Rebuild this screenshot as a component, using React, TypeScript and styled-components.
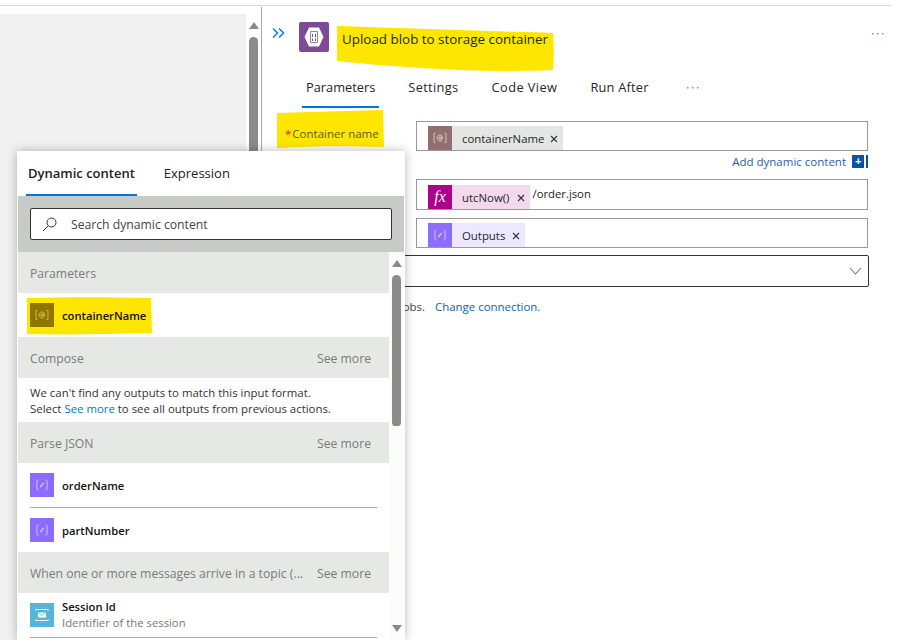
import React from "react";
import styled, { createGlobalStyle } from "styled-components";

const Global = createGlobalStyle`
  html, body { margin: 0; padding: 0; background: #fff; }
  body { font-family: "Open Sans", "Noto Sans", Arial, sans-serif; font-size: 12.5px; color: #222; }
`;

const Page = styled.div`
  position: relative;
  width: 902px;
  height: 640px;
  overflow: hidden;
  background: #fff;
  display: flex;
  flex-direction: column;
`;
const TopRule = styled.div`
  margin-top: 5px;
  width: 891px;
  height: 1px;
  flex: none;
  background: #dcdcdc;
`;
const Body = styled.div`
  flex: 1;
  display: flex;
  min-height: 0;
`;
const LeftPane = styled.div`
  width: 261px;
  flex: none;
  display: flex;
`;
const Canvas = styled.div`
  width: 246px;
  margin-top: 8px;
  background: #f1f1f1;
`;
const Track = styled.div`
  display: flex;
  flex-direction: column;
  align-items: center;
  flex: none;
`;
const LeftTrack = styled(Track)`
  width: 9px;
  margin-left: 3px;
  padding-top: 16px;
`;
const ArrowUp = styled.div`
  width: 0;
  height: 0;
  border-left: 5px solid transparent;
  border-right: 5px solid transparent;
  border-bottom: 7px solid #8a8a8a;
`;
const ArrowDown = styled(ArrowUp)`
  transform: rotate(180deg);
`;
const Thumb = styled.div<{ $h: number; $gap: number }>`
  width: 9px;
  height: ${(p) => p.$h}px;
  margin-top: ${(p) => p.$gap}px;
  border-radius: 5px 5px 4px 4px;
  background: #8b8b8b;
  flex: none;
`;
const RightPane = styled.div`
  flex: 1;
  margin-top: 1px;
  border-left: 1px solid #a9a9a9;
  min-width: 0;
`;
const Header = styled.div`
  display: flex;
  align-items: center;
  height: 30px;
  margin-top: 15px;
  padding: 0 18px 0 10px;
`;
const Chevrons = styled.svg`
  width: 13px;
  height: 12px;
  margin: -8px 14px 0 0;
  flex: none;
`;
const BlobBadge = styled.div`
  width: 30px;
  height: 30px;
  background: #804998;
  border-radius: 2px;
  display: flex;
  align-items: center;
  justify-content: center;
  flex: none;
`;
const Marked = styled.div`
  position: relative;
  isolation: isolate;
`;
const MarkerStroke = styled.svg<{ $l: number; $t: number; $w: number; $h: number }>`
  position: absolute;
  left: ${(p) => p.$l}px;
  top: ${(p) => p.$t}px;
  width: ${(p) => p.$w}px;
  height: ${(p) => p.$h}px;
  z-index: -1;
`;
const Title = styled(Marked)`
  margin-left: 13px;
  padding-top: 4px;
  font-size: 13.4px;
  line-height: 20px;
  color: #1c2a10;
  white-space: nowrap;
`;
const Dots = styled.svg`
  width: 12px;
  height: 3px;
  flex: none;
`;
const HeaderDots = styled(Dots)`
  margin-left: auto;
  margin-top: -7px;
`;
const Tabs = styled.div`
  display: flex;
  align-items: stretch;
  gap: 25px;
  height: 40px;
  margin-top: 16px;
  padding-left: 40px;
`;
const Tab = styled.div<{ $on?: boolean; $ls?: number }>`
  padding: 0 4px;
  display: flex;
  align-items: center;
  font-size: 12.8px;
  letter-spacing: ${(p) => p.$ls ?? 0}px;
  color: #262626;
  white-space: nowrap;
  border-bottom: 2px solid ${(p) => (p.$on ? "#0078d4" : "transparent")};
  box-sizing: border-box;
`;
const TabDots = styled(Dots)`
  align-self: center;
  margin-left: 9px;
  margin-top: -2px;
`;
const Form = styled.div`
  padding-left: 154px;
  padding-top: 13px;
  position: relative;
`;
const FieldLabel = styled(Marked)`
  position: absolute;
  left: 23px;
  top: 18px;
  font-size: 11.5px;
  line-height: 16px;
  color: #5c5a10;
  white-space: nowrap;
`;
const Star = styled.span`
  color: #e81123;
  margin-right: 1px;
`;
const Field = styled.div<{ $h: number; $mb: number }>`
  width: 452px;
  height: ${(p) => p.$h}px;
  margin-bottom: ${(p) => p.$mb}px;
  box-sizing: border-box;
  border: 1px solid #999;
  padding-left: 11px;
  display: flex;
  align-items: flex-end;
`;
const Chip = styled.div<{ $bg: string }>`
  display: flex;
  align-items: center;
  height: 24px;
  background: ${(p) => p.$bg};
  padding-right: 5px;
`;
const ChipText = styled.span<{ $gap?: number }>`
  margin: 0 ${(p) => p.$gap ?? 6}px 0 10px;
  font-size: 11.4px;
  color: #262626;
  white-space: nowrap;
`;
const Close = styled.svg`
  width: 8px;
  height: 8px;
  margin-top: 2px;
`;
const Plain = styled.span`
  align-self: flex-start;
  margin: 4px 0 0 2px;
  font-size: 11.3px;
  line-height: 20px;
  color: #222;
`;
const LinkRow = styled.div`
  width: 452px;
  height: 28px;
  display: flex;
  justify-content: flex-end;
  align-items: flex-start;
  padding-top: 3px;
  box-sizing: border-box;
`;
const AddLink = styled.span`
  font-size: 11.5px;
  line-height: 16px;
  color: #1f5fad;
  margin-right: 6px;
`;
const PlusBox = styled.div`
  width: 16px;
  height: 13px;
  margin-top: 1px;
  background: linear-gradient(90deg, #0a52a5 0 12px, transparent 12px 14px, #0a52a5 14px);
  color: #fff;
  font: bold 11px/13px "Liberation Sans", sans-serif;
  text-indent: 3px;
`;
const Dropdown = styled.div`
  width: 473px;
  height: 32px;
  margin-left: -20px;
  box-sizing: border-box;
  border: 1px solid #333;
  border-radius: 2px;
  display: flex;
  align-items: center;
  justify-content: flex-end;
  padding-right: 6px;
`;
const Chevron = styled.svg`
  width: 13px;
  height: 8px;
`;
const ConnectionLine = styled.div`
  margin-top: 12px;
  margin-left: -154px;
  display: flex;
  font-size: 11.45px;
  line-height: 16px;
  color: #444;
  white-space: nowrap;
`;
const ConnectedText = styled.div`
  width: 163px;
  display: flex;
  justify-content: flex-end;
  overflow: hidden;
`;
const ChangeLink = styled.span`
  margin-left: 10px;
  color: #0f62ae;
`;

/* Dynamic content flyout */
const Flyout = styled.div`
  position: absolute;
  left: 17px;
  top: 151px;
  width: 388px;
  height: 489px;
  box-sizing: border-box;
  padding: 0 1px;
  background: #fff;
  box-shadow: 0 0 10px rgba(0, 0, 0, 0.28);
  display: flex;
  flex-direction: column;
`;
const Caret = styled.div`
  position: absolute;
  right: -6px;
  top: 6px;
  width: 13px;
  height: 13px;
  background: #fff;
  transform: rotate(45deg);
  box-shadow: 2px -2px 4px rgba(0, 0, 0, 0.08);
  z-index: -1;
`;
const FlyTabs = styled.div`
  display: flex;
  height: 45px;
  flex: none;
  padding-left: 8px;
  gap: 25px;
`;
const FlyTab = styled.div<{ $on?: boolean }>`
  padding: 0 2px;
  display: flex;
  align-items: center;
  box-sizing: border-box;
  font-size: 13px;
  font-weight: ${(p) => (p.$on ? 600 : 400)};
  color: #222;
  white-space: nowrap;
  border-bottom: 2px solid ${(p) => (p.$on ? "#0078d4" : "transparent")};
`;
const SearchBand = styled.div`
  height: 56px;
  flex: none;
  background: #c8cac7;
  padding: 12px;
  box-sizing: border-box;
`;
const SearchBox = styled.div`
  height: 32px;
  box-sizing: border-box;
  background: #fff;
  border: 1px solid #333;
  border-radius: 2px;
  display: flex;
  align-items: center;
  padding-left: 11px;
  gap: 14px;
  font-size: 12.2px;
  color: #444;
`;
const SearchIcon = styled.svg`
  width: 15px;
  height: 15px;
`;
const ListArea = styled.div`
  flex: 1;
  display: flex;
  min-height: 0;
`;
const List = styled.div`
  width: 371px;
  flex: none;
`;
const SectionHead = styled.div`
  height: 41px;
  box-sizing: border-box;
  background: #e6e8e5;
  display: flex;
  align-items: center;
  justify-content: space-between;
  padding: 2px 18px 0 12px;
  font-size: 12.2px;
  color: #7b7b7b;
  white-space: nowrap;
`;
const Row = styled.div<{ $h: number }>`
  height: ${(p) => p.$h}px;
  box-sizing: border-box;
  display: flex;
  align-items: center;
  padding-left: 12px;
  gap: 8px;
`;
const RowRule = styled.div`
  height: 1px;
  margin: 0 12px;
  background: #a8a8a8;
`;
const RowName = styled.div`
  font-size: 11.2px;
  font-weight: 600;
  line-height: 16px;
  color: #111;
  white-space: nowrap;
  padding-top: 1px;
`;
const RowStack = styled.div`
  margin-top: -2px;
`;
const RowSub = styled.div`
  font-size: 11.3px;
  line-height: 16px;
  color: #777;
  white-space: nowrap;
`;
const MarkedRow = styled(Marked)`
  display: flex;
  align-items: center;
  gap: 8px;
`;
const Note = styled.div`
  height: 44px;
  padding: 7px 0 0 12px;
  box-sizing: border-box;
  font-size: 11.4px;
  line-height: 16px;
  color: #333;
  white-space: nowrap;
`;
const NoteLink = styled.span`
  color: #0078d4;
`;
const FlyTrack = styled(Track)`
  width: 15px;
  padding-top: 8px;
  background: #fcfcfc;
`;
const TrackSpacer = styled.div`
  flex: 1;
`;
const FlyDown = styled(ArrowDown)`
  margin-bottom: 8px;
`;
const IconBox = styled.div<{ $bg: string }>`
  width: 24px;
  height: 24px;
  flex: none;
  background: ${(p) => p.$bg};
  display: flex;
  align-items: center;
  justify-content: center;
`;
const FxText = styled.span`
  font: italic 16px/24px "Liberation Serif", serif;
  color: #fff;
`;

const ParamIcon = ({ bg = "#916f6f", fg = "#d9c9c9" }: { bg?: string; fg?: string }) => (
  <IconBox $bg={bg}>
    <svg width="14" height="12" viewBox="0 0 14 12" fill="none" stroke={fg} strokeWidth="0.9">
      <path d="M2.5 1.5H1v9h1.5M11.5 1.5H13v9h-1.5" />
      <circle cx="7" cy="6" r="1.3" />
      <path d="M8.3 4.7v2.2c0 .8 1.5.8 1.5-.9 0-1.8-1.2-3-2.8-3S4 4.200 4 6s1.300 3 3 3c.700 0 1.300-.2 1.800-.5" />
    </svg>
  </IconBox>
);
const VarIcon = () => (
  <IconBox $bg="#8c6cff">
    <svg width="14" height="12" viewBox="0 0 14 12" fill="none" stroke="#d8cfff" strokeWidth="0.9">
      <path d="M3.500 1H3C2 1 2 1.800 2 3v1.500C2 5.500 1.500 6 1 6c.5 0 1 .5 1 1.500V9c0 1.200 0 2 1 2h.5" />
      <path d="M10.500 1h.5c1 0 1 .8 1 2v1.500c0 1 .5 1.500 1 1.500-.5 0-1 .5-1 1.500V9c0 1.200 0 2-1 2h-.5" />
      <path d="M5.300 8 8.700 3.800" strokeWidth="1.300" />
    </svg>
  </IconBox>
);
const SessionIcon = () => (
  <IconBox $bg="#59b4d9">
    <svg width="14" height="14" viewBox="0 0 14 14" fill="none">
      <path d="M1 2.500v-1h12v1M1 11.500v1h12v-1" stroke="#fff" strokeWidth="1.200" />
      <rect x="3" y="4.500" width="8" height="5" fill="#fff" />
      <path d="M3 4.500 7 7.500l4-3" stroke="#59b4d9" strokeWidth="0.7" />
    </svg>
  </IconBox>
);
const X = () => (
  <Close viewBox="0 0 8 8" fill="none" stroke="#333" strokeWidth="1.100">
    <path d="M1 1l6 6M7 1 1 7" />
  </Close>
);
const DotMarks = () => (
  <>
    <rect x="0" y="1" width="1.500" height="1.500" />
    <rect x="5" y="1" width="1.500" height="1.500" />
    <rect x="10" y="1" width="1.500" height="1.500" />
  </>
);

const Section = ({ title, more = true }: { title: string; more?: boolean }) => (
  <SectionHead>
    <span>{title}</span>
    {more && <span>See more</span>}
  </SectionHead>
);

export default function App() {
  return (
    <Page>
      <Global />
      <TopRule />
      <Body>
        <LeftPane>
          <Canvas />
          <LeftTrack>
            <ArrowUp />
            <Thumb $h={590} $gap={8} />
          </LeftTrack>
        </LeftPane>
        <RightPane>
          <Header>
            <Chevrons viewBox="0 0 13 12" fill="none" stroke="#1a7fe0" strokeWidth="1.600">
              <path d="M1 1.500 5.500 6 1 10.500M7 1.500 11.500 6 7 10.500" />
            </Chevrons>
            <BlobBadge>
              <svg width="20" height="20" viewBox="0 0 20 20">
                <path d="M5 .5h10L19.500 10 15 19.500H5L.5 10z" fill="#fff" />
                <path d="M6.500 4.500h7v11h-7z" fill="none" stroke="#9d7bb0" strokeWidth="1" />
                <path d="M8.500 7v3M11.500 7v3M8.500 11.500v2.500M11.500 11.500v2.500" stroke="#804998" strokeWidth="1" />
              </svg>
            </BlobBadge>
            <Title>
              <MarkerStroke $l={-5} $t={0} $w={217} $h={47} viewBox="0 0 217 47">
                <path d="M0 1C60 3 150 6 216 8c1 12 1 25 0 37-70 3-150-2-216-9z" fill="#ffe600" />
              </MarkerStroke>
              Upload blob to storage container
            </Title>
            <HeaderDots viewBox="0 0 12 3" fill="#5a9bd8">
              <DotMarks />
            </HeaderDots>
          </Header>
          <Tabs>
            <Tab $on>Parameters</Tab>
            <Tab $ls={0.35}>Settings</Tab>
            <Tab $ls={0.42}>Code View</Tab>
            <Tab $ls={0.22}>Run After</Tab>
            <TabDots viewBox="0 0 12 3" fill="#5a9bd8">
              <DotMarks />
            </TabDots>
          </Tabs>
          <Form>
            <FieldLabel>
              <MarkerStroke $l={-9} $t={-16} $w={108} $h={39} viewBox="0 0 108 39">
                <path d="M1 3C35 2 70 1 107 0l1 37c-35-1-70-1-107 1z" fill="#ffe600" />
              </MarkerStroke>
              <Star>*</Star>Container name
            </FieldLabel>
            <Field $h={30} $mb={0}>
              <Chip $bg="#e4e6e4">
                <ParamIcon />
                <ChipText>containerName</ChipText>
                <X />
              </Chip>
            </Field>
            <LinkRow>
              <AddLink>Add dynamic content</AddLink>
              <PlusBox>+</PlusBox>
            </LinkRow>
            <Field $h={31} $mb={8}>
              <Chip $bg="#f3d9ee">
                <IconBox $bg="#ad008c">
                  <FxText>fx</FxText>
                </IconBox>
                <ChipText $gap={8}>utcNow()</ChipText>
                <X />
              </Chip>
              <Plain>/order.json</Plain>
            </Field>
            <Field $h={30} $mb={7}>
              <Chip $bg="#ece8ff">
                <VarIcon />
                <ChipText $gap={7}>Outputs</ChipText>
                <X />
              </Chip>
            </Field>
            <Dropdown>
              <Chevron viewBox="0 0 13 8" fill="none" stroke="#4d80b8" strokeWidth="1.100">
                <path d="M1 1l5.500 6L12 1" />
              </Chevron>
            </Dropdown>
            <ConnectionLine>
              <ConnectedText>
                <span>Connected to azureblobs.</span>
              </ConnectedText>
              <ChangeLink>Change connection.</ChangeLink>
            </ConnectionLine>
          </Form>
        </RightPane>
      </Body>
      <Flyout>
        <Caret />
        <FlyTabs>
          <FlyTab $on>Dynamic content</FlyTab>
          <FlyTab>Expression</FlyTab>
        </FlyTabs>
        <SearchBand>
          <SearchBox>
            <SearchIcon viewBox="0 0 15 15" fill="none" stroke="#333" strokeWidth="1">
              <circle cx="9.500" cy="5.500" r="4.500" />
              <path d="M6.200 8.800 1 14" />
            </SearchIcon>
            Search dynamic content
          </SearchBox>
        </SearchBand>
        <ListArea>
          <List>
            <Section title="Parameters" more={false} />
            <Row $h={44}>
              <MarkedRow>
                <MarkerStroke $l={-3} $t={-6} $w={125} $h={38} viewBox="0 0 125 38">
                  <path d="M0 1c40-1 85-1 124 0l1 35c-40 1-85 2-125 1z" fill="#ffe600" />
                </MarkerStroke>
                <ParamIcon bg="#8f7400" fg="#d8c040" />
                <RowName>containerName</RowName>
              </MarkedRow>
            </Row>
            <Section title="Compose" />
            <Note>
              We can't find any outputs to match this input format.
              <br />
              Select <NoteLink>See more</NoteLink> to see all outputs from previous actions.
            </Note>
            <Section title="Parse JSON" />
            <Row $h={44}>
              <VarIcon />
              <RowName>orderName</RowName>
            </Row>
            <RowRule />
            <Row $h={44}>
              <VarIcon />
              <RowName>partNumber</RowName>
            </Row>
            <Section title="When one or more messages arrive in a topic (..." />
            <Row $h={44}>
              <SessionIcon />
              <RowStack>
                <RowName>Session Id</RowName>
                <RowSub>Identifier of the session</RowSub>
              </RowStack>
            </Row>
            <RowRule />
          </List>
          <FlyTrack>
            <ArrowUp />
            <Thumb $h={151} $gap={8} />
            <TrackSpacer />
            <FlyDown />
          </FlyTrack>
        </ListArea>
      </Flyout>
    </Page>
  );
}
